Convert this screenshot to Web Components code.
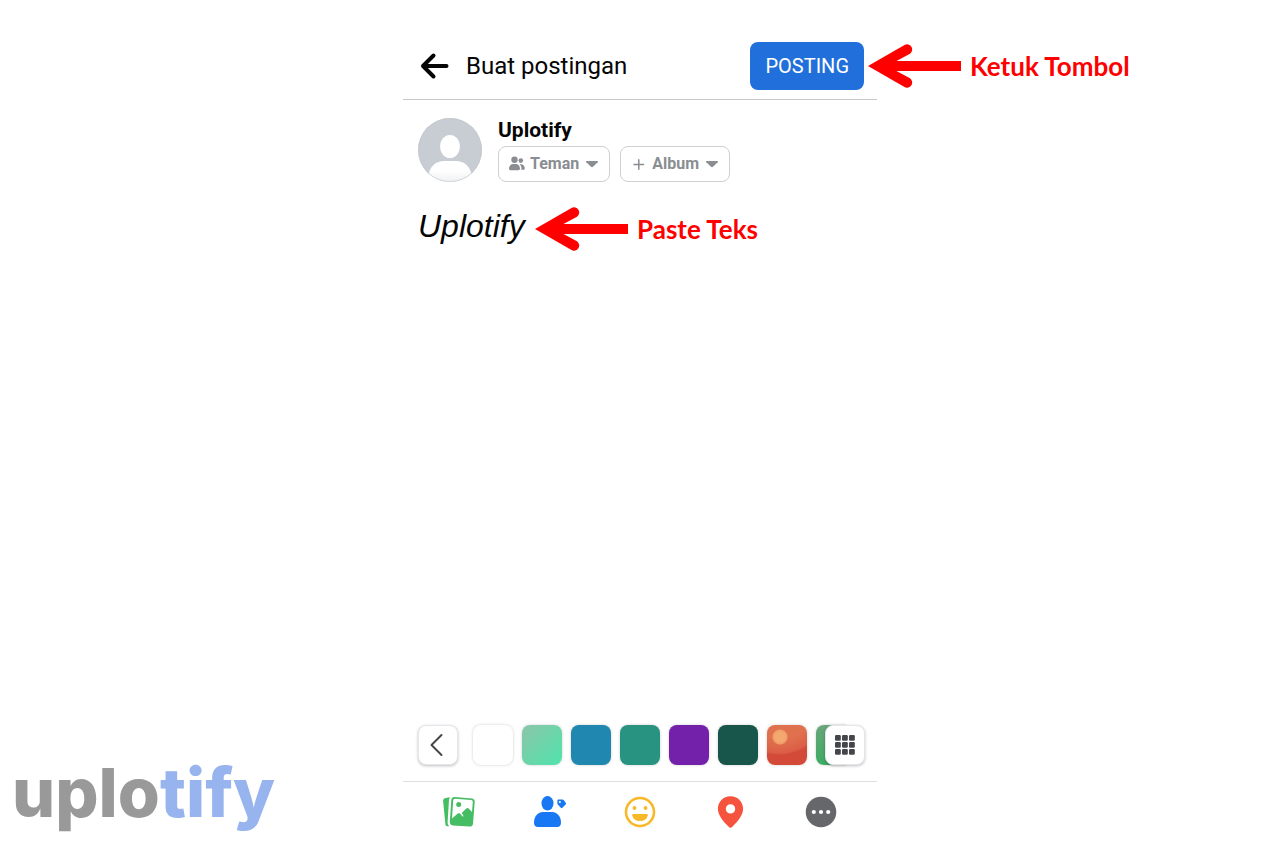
<!DOCTYPE html>
<html lang="id">
<head>
<meta charset="utf-8">
<meta name="viewport" content="width=device-width, initial-scale=1">
<title>Buat postingan</title>
<style>
  body {
    margin: 0;
    background: #fff;
    color: #050505;
    font-family: Roboto, "Liberation Sans", sans-serif;
  }
</style>
</head>
<body>
<tutorial-page>
  <brand-logo slot="brand"></brand-logo>
  <post-composer>
    <composer-header slot="header" heading="Buat postingan" action="POSTING">
      <call-out>Ketuk Tombol</call-out>
    </composer-header>
    <author-card slot="author" name="Uplotify">
      <picker-chip label="Privasi" options="Teman,Publik">
        <svg width="18" height="16" viewBox="0 0 18 16" fill="#8a8d91">
          <circle cx="6.500" cy="3.700" r="3.200"/>
          <circle cx="12.800" cy="4.600" r="2.300"/>
          <path d="M1 12.600C1 9.800 3 8 5.200 8h2.600c2.200 0 4.200 1.800 4.200 4.600 0 1-.6 1.700-1.600 1.700H2.600C1.600 14.300 1 13.600 1 12.600z"/>
          <path d="M11.500 8.200h1.600c2 0 3.700 1.700 3.700 4 0 1-.5 1.600-1.500 1.600h-2.100c.6-2.200.1-4.200-1.700-5.600z"/>
        </svg>
      </picker-chip>
      <picker-chip label="Album" options="Album">
        <svg width="18" height="16" viewBox="0 0 18 16" fill="none" stroke="#8a8d91" stroke-width="1.500" stroke-linecap="round">
          <path d="M4 8.500h9.600M8.800 3.700v9.600"/>
        </svg>
      </picker-chip>
    </author-card>
    <post-text slot="text" value="Uplotify">
      <call-out>Paste Teks</call-out>
    </post-text>
    <background-picker slot="backgrounds"></background-picker>
    <attach-bar slot="attach"></attach-bar>
  </post-composer>
</tutorial-page>

<script>
class TutorialPage extends HTMLElement {
  connectedCallback() {
    this.attachShadow({ mode: 'open' });
    this.shadowRoot.innerHTML = `
      <style>
        :host {
          display: grid;
          grid-template-columns: minmax(0, 1fr) minmax(0, 474px) minmax(0, 1fr);
          min-height: 100vh;
        }
        aside {
          display: flex;
          align-items: flex-end;
          padding: 0 0 12px 12px;
        }
      </style>
      <aside><slot name="brand"></slot></aside>
      <slot></slot>
    `;
  }
}
customElements.define('tutorial-page', TutorialPage);

class BrandLogo extends HTMLElement {
  connectedCallback() {
    this.attachShadow({ mode: 'open' });
    this.shadowRoot.innerHTML = `
      <style>
        :host {
          display: block;
          font: 800 68px/80px Inter, "Open Sans", sans-serif;
          color: #999;
        }
        span { color: #97b4ef; }
      </style>
      uplo<span>tify</span>
    `;
  }
}
customElements.define('brand-logo', BrandLogo);

class CallOut extends HTMLElement {
  connectedCallback() {
    this.attachShadow({ mode: 'open' });
    this.shadowRoot.innerHTML = `
      <style>
        :host {
          display: flex;
          align-items: center;
          gap: 9px;
          color: #f00;
          font: 700 26px/32px Lato, "Open Sans", sans-serif;
          white-space: nowrap;
        }
        svg { flex: none; }
      </style>
      <svg width="93" height="46" viewBox="0 0 93 46" fill="#f00" aria-hidden="true">
        <path d="M0 23 36.500 1.900A5.200 5.200 0 0 1 42 10.700L28.500 18H93v10H28.500l13.500 7.300A5.200 5.200 0 0 1 36.500 44.100z"/>
      </svg>
      <span><slot></slot></span>
    `;
  }
}
customElements.define('call-out', CallOut);

class PostComposer extends HTMLElement {
  connectedCallback() {
    this.attachShadow({ mode: 'open' });
    this.shadowRoot.innerHTML = `
      <style>
        :host {
          display: flex;
          flex-direction: column;
        }
        .body {
          flex: 1;
          display: flex;
          flex-direction: column;
          gap: 22px;
          padding: 18px 15px 0;
        }
      </style>
      <slot name="header"></slot>
      <div class="body">
        <slot name="author"></slot>
        <slot name="text"></slot>
      </div>
      <slot name="backgrounds"></slot>
      <slot name="attach"></slot>
    `;
  }
}
customElements.define('post-composer', PostComposer);

class ComposerHeader extends HTMLElement {
  connectedCallback() {
    this.attachShadow({ mode: 'open' });
    this.shadowRoot.innerHTML = `
      <style>
        :host {
          display: flex;
          align-items: center;
          gap: 16px;
          padding: 42px 13px 9px 15px;
          border-bottom: 1px solid #c8c8c8;
        }
        button {
          border: 0;
          padding: 0;
          background: none;
          font: inherit;
          cursor: pointer;
        }
        .back { display: flex; }
        h1 {
          flex: 1;
          margin: 0;
          font-size: 24px;
          line-height: 32px;
          font-weight: 400;
        }
        .action { position: relative; }
        .post {
          height: 48px;
          padding: 0 15px;
          border-radius: 8px;
          background: #216fdb;
          color: #fff;
          font-size: 20px;
          line-height: 24px;
        }
        /* note pinned to the right edge of the button */
        ::slotted(call-out) {
          position: absolute;
          left: calc(100% + 4px);
          top: 1px;
        }
      </style>
      <button class="back" aria-label="Kembali">
        <svg width="32" height="32" viewBox="0 0 32 32" fill="none" stroke="#050505" stroke-width="4" stroke-linecap="round" stroke-linejoin="round">
          <path d="M28.500 16H5M15.500 5.500 5 16l10.500 10.500"/>
        </svg>
      </button>
      <h1>${this.getAttribute('heading')}</h1>
      <div class="action">
        <button class="post">${this.getAttribute('action')}</button>
        <slot></slot>
      </div>
    `;
  }
}
customElements.define('composer-header', ComposerHeader);

class AuthorCard extends HTMLElement {
  connectedCallback() {
    this.attachShadow({ mode: 'open' });
    this.shadowRoot.innerHTML = `
      <style>
        :host {
          display: flex;
          align-items: center;
          gap: 16px;
        }
        .avatar { flex: none; }
        h2 {
          margin: 0 0 4px;
          font-size: 21px;
          line-height: 24px;
          font-weight: 700;
        }
        .chips {
          display: flex;
          gap: 10px;
        }
      </style>
      <svg class="avatar" width="64" height="64" viewBox="0 0 64 64" aria-hidden="true">
        <defs>
          <clipPath id="round"><circle cx="32" cy="32" r="32"/></clipPath>
          <linearGradient id="shirt" x1="0" y1="0" x2="0" y2="1">
            <stop offset=".4" stop-color="#fff"/>
            <stop offset="1" stop-color="#eeeff1"/>
          </linearGradient>
        </defs>
        <g clip-path="url(#round)">
          <path fill="#c8ccd3" d="M0 0h64v64H0z"/>
          <ellipse cx="32" cy="28.500" rx="10" ry="11.500" fill="#fff"/>
          <path fill="url(#shirt)" d="M10 58c2-10 8-15 16-15h12c8 0 14 5 16 15v8H10z"/>
        </g>
        <circle cx="32" cy="32" r="31.500" fill="none" stroke="#c3c6cb" stroke-opacity=".6"/>
      </svg>
      <div>
        <h2>${this.getAttribute('name')}</h2>
        <div class="chips"><slot></slot></div>
      </div>
    `;
  }
}
customElements.define('author-card', AuthorCard);

class PickerChip extends HTMLElement {
  connectedCallback() {
    const options = this.getAttribute('options').split(',');
    this.attachShadow({ mode: 'open' });
    this.shadowRoot.innerHTML = `
      <style>
        :host {
          display: flex;
          align-items: center;
          gap: 4px;
          box-sizing: border-box;
          height: 36px;
          padding: 0 10px 0 9px;
          border: 1px solid #ced0d4;
          border-radius: 8px;
          color: #8a8d91;
        }
        ::slotted(svg) { flex: none; }
        select {
          appearance: none;
          field-sizing: content;
          border: 0;
          padding: 0;
          background: none;
          color: inherit;
          font: 700 16px/20px Roboto, sans-serif;
        }
        .caret { margin-left: 2px; }
      </style>
      <slot></slot>
      <select aria-label="${this.getAttribute('label')}">
        ${options.map(o => `<option>${o}</option>`).join('')}
      </select>
      <svg class="caret" width="14" height="8" viewBox="0 0 14 8" fill="#8a8d91" aria-hidden="true">
        <path d="M1.800 1h10.400c.7 0 1 .7.500 1.200L8 6.800c-.6.500-1.400.5-2 0L1.300 2.200C.8 1.700 1.100 1 1.800 1z"/>
      </svg>
    `;
  }
}
customElements.define('picker-chip', PickerChip);

class PostText extends HTMLElement {
  connectedCallback() {
    this.attachShadow({ mode: 'open' });
    this.shadowRoot.innerHTML = `
      <style>
        :host {
          display: flex;
          flex: 1;
          position: relative;
        }
        textarea {
          flex: 1;
          min-width: 0;
          border: 0;
          outline: 0;
          padding: 4px 0;
          background: none;
          color: #050505;
          resize: none;
          font: italic 400 32px/36px "Liberation Sans", Arial, sans-serif;
        }
        /* note laid over the text box, just after the typed word */
        ::slotted(call-out) {
          position: absolute;
          left: 117px;
          top: 2px;
        }
      </style>
      <textarea aria-label="Teks postingan">${this.getAttribute('value')}</textarea>
      <slot></slot>
    `;
  }
}
customElements.define('post-text', PostText);

const BACKGROUNDS = [
  ['Polos', '#fff'],
  ['Hijau muda', 'linear-gradient(135deg, #8cc5a8, #4fe3ac)'],
  ['Biru', '#2088b0'],
  ['Hijau', '#289380'],
  ['Ungu', '#7320ab'],
  ['Hijau tua', '#18554a'],
  ['Senja', 'radial-gradient(circle at 13px 12px, #f3a870 0 5px, #f09a66 7px, transparent 8px), radial-gradient(circle at 12px -20px, #e0714f 0 34px, #db5e45 48px, #d44a39 50px)'],
  ['Daun', 'linear-gradient(#6aa67a, #3dac63)']
];

class BackgroundPicker extends HTMLElement {
  connectedCallback() {
    this.attachShadow({ mode: 'open' });
    this.shadowRoot.innerHTML = `
      <style>
        :host {
          display: flex;
          position: relative;
          padding: 0 12px 8px 15px;
        }
        button {
          flex: none;
          width: 40px;
          height: 40px;
          padding: 0;
          border: 0;
          border-radius: 8px;
          box-shadow: 0 0 3px rgba(0, 0, 0, 0.2);
          cursor: pointer;
        }
        .tool {
          display: grid;
          place-items: center;
          box-sizing: border-box;
          background: #fff;
          border: 1px solid #e4e6eb;
          box-shadow: 0 1px 3px rgba(0, 0, 0, 0.25);
          margin-top: 8px;
        }
        .swatches {
          flex: 1;
          display: flex;
          gap: 9px;
          margin-right: 19px;
          padding: 8px 0 8px 15px;
          overflow: hidden;
        }
        /* the grid button covers the end of the scrolling row */
        .all {
          position: absolute;
          top: 0;
          right: 12px;
        }
      </style>
      <button class="tool" aria-label="Tutup latar">
        <svg width="24" height="24" viewBox="0 0 24 24" fill="none" stroke="#444649" stroke-width="2" stroke-linecap="round" stroke-linejoin="round">
          <path d="M15.500 2 5.500 12l10 10"/>
        </svg>
      </button>
      <div class="swatches">
        ${BACKGROUNDS.map(([name, fill]) => `<button aria-label="${name}" style="background: ${fill}"></button>`).join('')}
      </div>
      <button class="tool all" aria-label="Semua latar">
        <svg width="20" height="20" viewBox="0 0 20 20" fill="#444649">
          ${[0, 7, 14].map(y => [0, 7, 14].map(x => `<rect x="${x}" y="${y}" width="5.800" height="5.800" rx="1.200"/>`).join('')).join('')}
        </svg>
      </button>
    `;
  }
}
customElements.define('background-picker', BackgroundPicker);

class AttachBar extends HTMLElement {
  connectedCallback() {
    this.attachShadow({ mode: 'open' });
    this.shadowRoot.innerHTML = `
      <style>
        :host {
          display: flex;
          padding: 13px 11px 15px;
          border-top: 1px solid #dcdde0;
        }
        button {
          flex: 1;
          display: grid;
          place-items: center;
          padding: 0;
          border: 0;
          background: none;
          cursor: pointer;
        }
      </style>
      <button aria-label="Foto/Video">
        <svg width="34" height="34" viewBox="0 0 34 34">
          <path fill="#45bd62" d="M3.700 3 8.300 2.300C7.500 3.200 7.100 4 7 5L5.600 27c-.1 1.600.5 3.200 1.700 4.300H5.500c-1.300 0-2-.8-2.100-2L1.100 6C1 4.400 2 3.200 3.700 3z"/>
          <path fill="#45bd62" d="m12.600 2 17.200 1.400c1.800.1 3 1.500 2.900 3.300L31 28.700c-.1 1.800-1.500 3-3.300 2.900l-17-1.200c-1.800-.1-3-1.500-2.900-3.300L9.300 4.900C9.400 3.100 10.800 1.900 12.600 2z"/>
          <path fill="#fff" d="m13.300 3.800 15.800 1.300c1 .1 1.800.9 1.700 1.900l-.8 10-3.100-3.300c-.7-.8-1.800-.8-2.600-.1l-4.600 4.500 1.700 2.600c.3.600-.3 1.100-.8.700L18 18.600c-.7-.6-1.500-.6-2.200 0l-5.800 5L11.200 5.600c.1-1.100 1-1.900 2.100-1.800z"/>
          <circle cx="16.700" cy="9.400" r="2.500" fill="#45bd62"/>
        </svg>
      </button>
      <button aria-label="Tandai orang">
        <svg width="34" height="34" viewBox="0 0 34 34" fill="#1877f2">
          <ellipse cx="14.500" cy="8.300" rx="6" ry="7.200"/>
          <path d="M1 27.500c0-6 4-10.500 9-10.500h9c5 0 9 4.500 9 10.500 0 3-1.500 4.500-4 4.500H5c-2.500 0-4-1.500-4-4.500z"/>
          <path d="M25.300 4.500h4c.6 0 1 .2 1.400.6l2 2.600c.5.600.4 1.200-.1 1.700l-3.200 3.400c-.5.500-1.100.5-1.600 0l-3-3.200c-.3-.3-.4-.7-.4-1.100V5.500c0-.6.4-1 .9-1z"/>
          <circle cx="26.900" cy="7" r="1" fill="#fff"/>
        </svg>
      </button>
      <button aria-label="Perasaan/aktivitas">
        <svg width="34" height="34" viewBox="0 0 34 34" fill="#f7b928">
          <circle cx="17" cy="17" r="14" fill="none" stroke="#f7b928" stroke-width="2.600"/>
          <circle cx="11.500" cy="13" r="1.900"/>
          <circle cx="22.500" cy="13" r="1.900"/>
          <path d="M10.300 19h13.400c.7 0 1.100.5 1 1.200-.6 3.600-3.700 5.800-7.700 5.800s-7.100-2.200-7.700-5.800c-.1-.7.3-1.200 1-1.200z"/>
        </svg>
      </button>
      <button aria-label="Lokasi">
        <svg width="34" height="34" viewBox="0 0 34 34" fill="#f5533d">
          <path fill-rule="evenodd" d="M17.500 1.200c7.200 0 12.600 5.500 12.600 12.600 0 6.500-5.300 12.500-11 18.300-.9 1-2.300 1-3.200 0-5.700-5.800-11-11.800-11-18.300C4.900 6.700 10.300 1.200 17.500 1.200zm0 8a4.700 4.700 0 1 0 0 9.400 4.700 4.700 0 0 0 0-9.400z"/>
        </svg>
      </button>
      <button aria-label="Lainnya">
        <svg width="34" height="34" viewBox="0 0 34 34" fill="#65676b">
          <circle cx="17" cy="17" r="15.300"/>
          <g fill="#fff">
            <circle cx="9.800" cy="17" r="2.100"/>
            <circle cx="17" cy="17" r="2.100"/>
            <circle cx="24.200" cy="17" r="2.100"/>
          </g>
        </svg>
      </button>
    `;
  }
}
customElements.define('attach-bar', AttachBar);
</script>
</body>
</html>
